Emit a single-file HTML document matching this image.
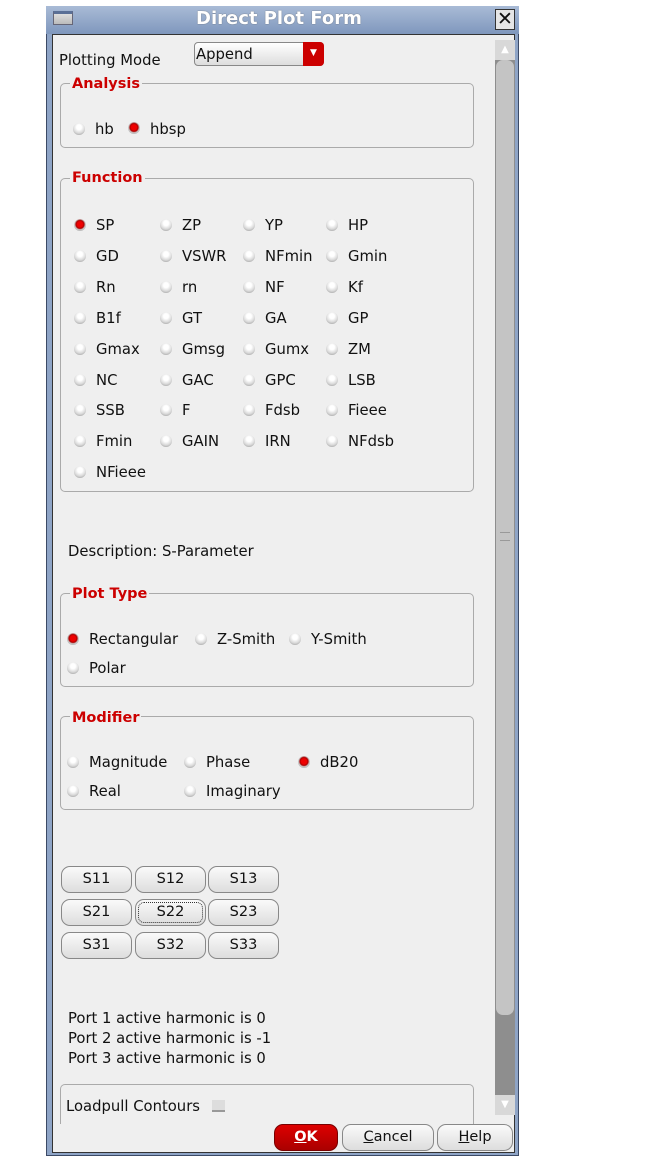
<!DOCTYPE html>
<html><head><style>
body{margin:0;width:653px;height:1165px;background:#fff;position:relative;font-family:"DejaVu Sans","Liberation Sans",sans-serif;font-size:14.8px;color:#111;overflow:hidden}
.a{position:absolute;white-space:nowrap}
#win{position:absolute;left:46px;top:6px;width:473px;height:1150px;background:#8ea4c6;border:1px solid #3c4a66;box-sizing:border-box}
#title{position:absolute;left:46px;top:6px;width:473px;height:28px;background:linear-gradient(#a9bbd6,#7f97bd)}
#body{position:absolute;left:52px;top:34px;width:463px;height:1119px;background:#efefef;border:1px solid #333;box-sizing:border-box}
.grp{position:absolute;border:1px solid #aaa;border-radius:5px;box-sizing:border-box}
.lg{position:absolute;color:#cc0000;font-weight:bold;background:#efefef;padding:0 2px;font-size:14.5px}
.r{position:absolute;width:12px;height:12px;border-radius:50%;background:radial-gradient(circle at 50% 35%,#fff 25%,#d8d8d8 60%,#888 100%);}
.r.on{background:radial-gradient(circle at 50% 45%,#e00 30%,#a00 45%,#ccc 60%,#888 100%)}
.btn{position:absolute;height:27px;border:1px solid #888;border-radius:9px;background:linear-gradient(#fafafa,#ddd);box-sizing:border-box;text-align:center;line-height:25px;font-size:14.5px}
</style></head><body>
<div id="win"></div>
<div id="title"></div>
<div class="a" style="left:53px;top:11px;width:20px;height:14px;background:linear-gradient(#ddd,#bbb);border:1px solid #667;border-top:3px solid #5a6f96;box-sizing:border-box"></div>
<div class="a" style="left:196px;top:8px;font-weight:bold;font-size:18px;color:#fff;text-shadow:0 0 1px #555">Direct Plot Form</div>
<div class="a" style="left:495px;top:9px;width:20px;height:21px;background:#e6e6e6;border:1px solid #333;box-sizing:border-box;font-size:19px;line-height:19px;text-align:center;font-weight:bold">✕</div>
<div id="body"></div>
<div class="a" style="left:495px;top:40px;width:20px;height:1075px;background:#8e8e8e"></div>
<div class="a" style="left:495px;top:40px;width:20px;height:20px;background:#d8d8d8;color:#fff;font-size:10px;text-align:center;line-height:20px">▲</div>
<div class="a" style="left:496px;top:60px;width:18px;height:955px;background:#c4c4c4;border-radius:7px"></div>
<div class="a" style="left:500px;top:532px;width:10px;height:7px;border-top:1px solid #999;border-bottom:1px solid #999"></div>
<div class="a" style="left:495px;top:1095px;width:20px;height:20px;background:#d8d8d8;color:#fff;font-size:10px;text-align:center;line-height:20px">▼</div>

<div class="a" style="left:59px;top:52px">Plotting Mode</div>
<div class="a" style="left:194px;top:42px;width:130px;height:24px;border:1px solid #888;border-radius:4px;background:linear-gradient(#fff,#ddd);box-sizing:border-box"></div>
<div class="a" style="left:196px;top:46px">Append</div>
<div class="a" style="left:303px;top:42px;width:21px;height:24px;background:#c00;border-radius:0 4px 4px 0;color:#fff;font-size:9px;text-align:center;line-height:22px">▼</div>

<div class="grp" style="left:60px;top:83px;width:414px;height:65px"></div>
<div class="lg" style="left:70px;top:76px">Analysis</div>
<div class="r" style="left:73px;top:123px"></div><div class="a" style="left:95px;top:121px">hb</div>
<div class="r on" style="left:128px;top:122px"></div><div class="a" style="left:150px;top:121px">hbsp</div>

<div class="grp" style="left:60px;top:178px;width:414px;height:314px"></div>
<div class="lg" style="left:70px;top:170px">Function</div>
<div id="fn"></div>

<div class="a" style="left:68px;top:543px">Description: S-Parameter</div>

<div class="grp" style="left:60px;top:593px;width:414px;height:94px"></div>
<div class="lg" style="left:70px;top:586px">Plot Type</div>
<div class="r on" style="left:67px;top:633px"></div><div class="a" style="left:89px;top:631px">Rectangular</div>
<div class="r" style="left:195px;top:633px"></div><div class="a" style="left:217px;top:631px">Z-Smith</div>
<div class="r" style="left:289px;top:633px"></div><div class="a" style="left:311px;top:631px">Y-Smith</div>
<div class="r" style="left:67px;top:662px"></div><div class="a" style="left:89px;top:660px">Polar</div>

<div class="grp" style="left:60px;top:716px;width:414px;height:94px"></div>
<div class="lg" style="left:70px;top:710px">Modifier</div>
<div class="r" style="left:67px;top:756px"></div><div class="a" style="left:89px;top:754px">Magnitude</div>
<div class="r" style="left:184px;top:756px"></div><div class="a" style="left:206px;top:754px">Phase</div>
<div class="r on" style="left:298px;top:756px"></div><div class="a" style="left:320px;top:754px">dB20</div>
<div class="r" style="left:67px;top:785px"></div><div class="a" style="left:89px;top:783px">Real</div>
<div class="r" style="left:184px;top:785px"></div><div class="a" style="left:206px;top:783px">Imaginary</div>

<div id="sb"></div>

<div class="a" style="left:68px;top:1010px">Port 1 active harmonic is 0</div>
<div class="a" style="left:68px;top:1030px">Port 2 active harmonic is -1</div>
<div class="a" style="left:68px;top:1050px">Port 3 active harmonic is 0</div>

<div class="a" style="left:60px;top:1084px;width:414px;height:40px;border:1px solid #aaa;border-bottom:none;border-radius:5px 5px 0 0;box-sizing:border-box"></div>
<div class="a" style="left:66px;top:1098px">Loadpull Contours</div>
<div class="a" style="left:212px;top:1100px;width:13px;height:10px;background:#ddd;border-bottom:2px solid #999"></div>

<div class="btn" style="left:274px;top:1124px;width:64px;background:linear-gradient(#d00,#a00);color:#fff;font-weight:bold;border-color:#700"><u>O</u>K</div>
<div class="btn" style="left:342px;top:1124px;width:92px"><u>C</u>ancel</div>
<div class="btn" style="left:437px;top:1124px;width:76px"><u>H</u>elp</div>

<script>
var names=[["SP","ZP","YP","HP"],["GD","VSWR","NFmin","Gmin"],["Rn","rn","NF","Kf"],["B1f","GT","GA","GP"],["Gmax","Gmsg","Gumx","ZM"],["NC","GAC","GPC","LSB"],["SSB","F","Fdsb","Fieee"],["Fmin","GAIN","IRN","NFdsb"],["NFieee"]];
var xs=[74,160,243,326],h="";
names.forEach(function(r,i){var y=217+i*30.9;r.forEach(function(n,j){h+='<div class="r'+(i==0&&j==0?' on':'')+'" style="left:'+xs[j]+'px;top:'+(y+2)+'px"></div><div class="a" style="left:'+(xs[j]+22)+'px;top:'+y+'px">'+n+'</div>';});});
document.getElementById('fn').outerHTML=h;
var s="",bx=[61,135,208];
for(var i=0;i<3;i++)for(var j=0;j<3;j++){s+='<div class="btn" style="left:'+bx[j]+'px;top:'+(866+i*33)+'px;width:71px;'+(i==1&&j==1?'outline:1px dotted #333;outline-offset:-4px':'')+'">S'+(i+1)+(j+1)+'</div>';}
document.getElementById('sb').outerHTML=s;
</script>
</body></html>
